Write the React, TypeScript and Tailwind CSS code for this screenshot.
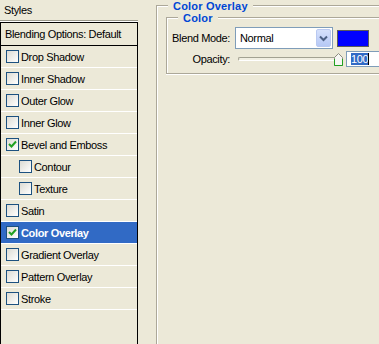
const FONT = "font-['Liberation_Sans',Arial,sans-serif]";

type Effect = { name: string; checked?: boolean; indent?: boolean; selected?: boolean };

const EFFECTS: Effect[] = [
  { name: "Drop Shadow" },
  { name: "Inner Shadow" },
  { name: "Outer Glow" },
  { name: "Inner Glow" },
  { name: "Bevel and Emboss", checked: true },
  { name: "Contour", indent: true },
  { name: "Texture", indent: true },
  { name: "Satin" },
  { name: "Color Overlay", checked: true, selected: true },
  { name: "Gradient Overlay" },
  { name: "Pattern Overlay" },
  { name: "Stroke" },
];

function Checkbox({ checked }: { checked?: boolean }) {
  return (
    <div className="w-[13px] h-[13px] shrink-0 border border-[#1C5180] bg-gradient-to-br from-[#DCDBD3] to-white flex items-center justify-center">
      {checked && (
        <svg width="9" height="9" viewBox="0 0 9 9">
          <path d="M1 4 L3.5 6.5 L8 1.5" fill="none" stroke="#21A121" strokeWidth="2" />
        </svg>
      )}
    </div>
  );
}

function EffectRow({ e }: { e: Effect }) {
  return (
    <div
      className={`h-[22px] border-b border-white flex items-center gap-[2px] ${e.indent ? "pl-[18px]" : "pl-[5px]"} ${
        e.selected ? "bg-[#316AC5] text-white font-bold" : ""
      }`}
    >
      <Checkbox checked={e.checked} />
      <span className="pt-[1px]">{e.name}</span>
    </div>
  );
}

function GroupTitle({ children, left }: { children: string; left: string }) {
  return (
    <span
      className={`absolute -top-[6px] ${left} px-[5px] bg-[#ECE9D8] text-[#0046D5] font-bold leading-[12px] tracking-[0.2px]`}
    >
      {children}
    </span>
  );
}

export default function App() {
  return (
    <div
      className={`w-[379px] h-[344px] bg-[#ECE9D8] flex overflow-hidden text-[11px] tracking-[-0.35px] text-black ${FONT}`}
    >
      {/* styles list */}
      <div className="w-[138px] shrink-0 flex flex-col">
        <div className="h-[20px] pl-[4px] flex items-center">Styles</div>
        <div className="h-[2px] border-t border-[#9A998C] bg-white"></div>
        <div className="flex-1 border-l border-r border-t border-black">
          <div className="h-[23px] pl-[4px] border-b border-black flex items-center">Blending Options: Default</div>
          {EFFECTS.map((e) => (
            <EffectRow key={e.name} e={e} />
          ))}
        </div>
      </div>

      {/* options */}
      <div className="flex-1 pl-[18px] pt-[5px]">
        <div className="relative w-[260px] h-[400px] border-l border-t border-[#ACA899] shadow-[inset_1px_1px_0_#fff] pl-[9px] pt-[11px]">
          <GroupTitle left="left-[11px]">Color Overlay</GroupTitle>
          <div className="relative w-[240px] h-[57px] border border-[#ACA899] shadow-[inset_1px_1px_0_#fff,0_1px_0_#fff] pt-[9px]">
            <GroupTitle left="left-[11px]">Color</GroupTitle>

            <div className="flex items-center">
              <span className="w-[63px] text-right">Blend Mode:</span>
              <div className="ml-[5px] w-[98px] h-[22px] border border-[#7F9DB9] bg-white flex items-center justify-between p-[1px]">
                <span className="pl-[3px]">Normal</span>
                <div className="w-[15px] h-full rounded-[2px] border border-[#B9C9F1] bg-gradient-to-b from-[#D6E1FC] to-[#B6C8F5] flex items-center justify-center">
                  <svg width="9" height="7" viewBox="0 0 9 7">
                    <path d="M1 1.5 L4.5 5 L8 1.5" fill="none" stroke="#4D6185" strokeWidth="2" />
                  </svg>
                </div>
              </div>
              <div className="ml-[4px] w-[32px] h-[17px] border border-[#5A5A5A] bg-[#0000FF]"></div>
            </div>

            <div className="flex items-center mt-[2px]">
              <span className="w-[63px] text-right">Opacity:</span>
              <div className="ml-[8px] w-[106px] h-[16px] relative flex items-center">
                <div className="w-[99px] h-[4px] rounded-l-[2px] border-t border-l border-[#A2A191] border-b border-b-white bg-[#F1EFE2]"></div>
                <svg className="absolute left-[96px] top-[2px]" width="9" height="13" viewBox="0 0 9 13">
                  <path d="M0.5 4.5 L4.5 0.5 L8.5 4.5 L8.5 12.5 L0.5 12.5 Z" fill="#F7F7F4" stroke="#8C8C80" />
                  <path d="M0.5 6 L0.5 12.5 L8.5 12.5 L8.5 6" fill="none" stroke="#21A121" />
                </svg>
              </div>
              <div className="ml-[2px] w-[40px] h-[16px] border border-[#7F9DB9] bg-white flex items-center pl-[4px]">
                <span className="bg-[#316AC5] text-white leading-[12px]">100</span>
                <span className="w-[1px] h-[12px] bg-black"></span>
              </div>
            </div>
          </div>
        </div>
      </div>
    </div>
  );
}
